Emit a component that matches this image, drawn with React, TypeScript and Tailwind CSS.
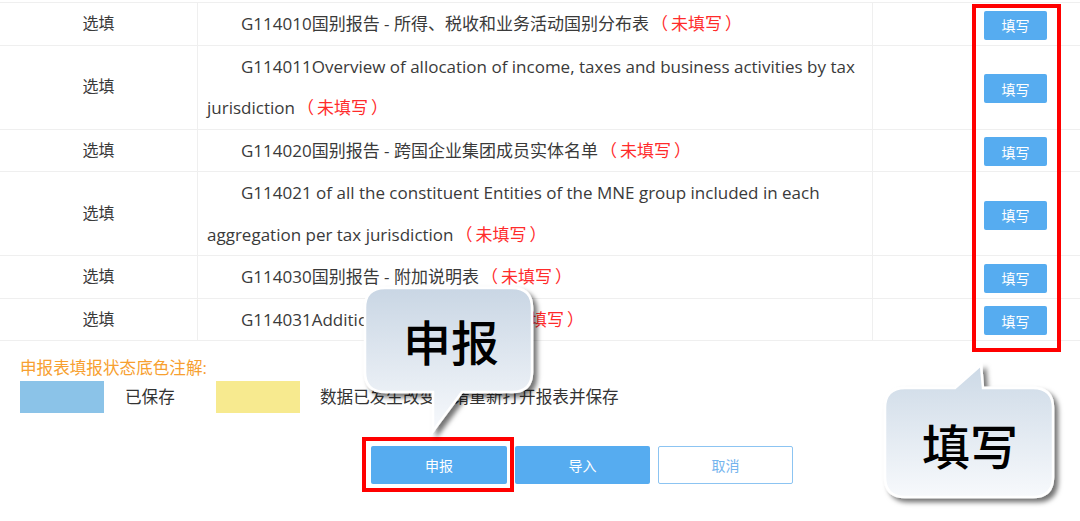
import React from "react";

const rows: { en: React.ReactNode; lines: number }[] = [
  { en: "G114010国别报告 - 所得、税收和业务活动国别分布表", lines: 1 },
  { en: "G114011Overview of allocation of income, taxes and business activities by tax jurisdiction", lines: 2 },
  { en: "G114020国别报告 - 跨国企业集团成员实体名单", lines: 1 },
  { en: "G114021 of all the constituent Entities of the MNE group included in each aggregation per tax jurisdiction", lines: 2 },
  { en: "G114030国别报告 - 附加说明表", lines: 1 },
  { en: "G114031Additional Information", lines: 1 },
];

function Bubble1() {
  return (
    <div className="absolute left-[360px] top-[284px] w-[190px] h-[160px]">
      <svg width="190" height="160" className="absolute left-0 top-0">
        <defs>
          <linearGradient id="g1" x1="0" y1="0" x2="0" y2="1">
            <stop offset="0" stopColor="#c9d6e4" />
            <stop offset="1" stopColor="#f7f9fc" />
          </linearGradient>
          <filter id="sh1" x="-20%" y="-20%" width="140%" height="140%">
            <feDropShadow dx="4" dy="4" stdDeviation="2.5" floodColor="#000" floodOpacity="0.55" />
          </filter>
        </defs>
        <path
          d="M 25 4 H 152 Q 172 4 172 24 V 88 Q 172 108 152 108 H 102 L 73 147 L 73 108 H 25 Q 5 108 5 88 V 24 Q 5 4 25 4 Z"
          fill="url(#g1)"
          stroke="#ffffff"
          strokeWidth="2.5"
          filter="url(#sh1)"
        />
      </svg>
      <div className="absolute left-[5px] top-[4px] w-[167px] h-[104px] flex items-center justify-center text-[48px] leading-none font-medium text-black [font-family:'Noto_Sans_CJK_SC',sans-serif] pl-[5px]">
        申报
      </div>
    </div>
  );
}

function Bubble2() {
  return (
    <div className="absolute left-[880px] top-[360px] w-[195px] h-[155px]">
      <svg width="195" height="155" className="absolute left-0 top-0">
        <defs>
          <linearGradient id="g2" x1="0" y1="0" x2="0" y2="1">
            <stop offset="0" stopColor="#ccd9e6" />
            <stop offset="1" stopColor="#f7f9fc" />
          </linearGradient>
          <filter id="sh2" x="-20%" y="-20%" width="140%" height="140%">
            <feDropShadow dx="4" dy="4" stdDeviation="2.5" floodColor="#000" floodOpacity="0.55" />
          </filter>
        </defs>
        <path
          d="M 25 28 H 75 L 101 5 L 103 28 H 153 Q 173 28 173 48 V 117 Q 173 137 153 137 H 25 Q 5 137 5 117 V 48 Q 5 28 25 28 Z"
          fill="url(#g2)"
          stroke="#ffffff"
          strokeWidth="2.5"
          filter="url(#sh2)"
        />
      </svg>
      <div className="absolute left-[5px] top-[28px] w-[168px] h-[109px] flex items-center justify-center text-[48px] leading-none font-medium text-black [font-family:'Noto_Sans_CJK_SC',sans-serif] pt-[3px] pl-[2px]">
        填写
      </div>
    </div>
  );
}

export default function App() {
  return (
    <div className="relative w-[1080px] h-[521px] overflow-hidden bg-white text-[#3a3a3a] [font-family:'Open_Sans','Noto_Sans_CJK_SC',sans-serif] text-[16px]">
      <div className="pt-[2px]">
        <div className="border-t border-[#efefef]">
          {rows.map((r, i) => (
            <div
              key={i}
              className="grid grid-cols-[198px_675px_1fr] border-b border-[#efefef] leading-[41.5px]"
            >
              <div className="flex items-center justify-center border-r border-[#efefef]">选填</div>
              <div className="border-r border-[#efefef] pl-[9px] pr-[8px] indent-[34px] text-[17px]">
                {r.en}
                <span className="text-[#ff2b2b] pl-[2px]">
                  （<span className="px-[3px]">未填写</span>）
                </span>
              </div>
              <div className="flex items-center pl-[111px]">
                <button className="mt-[3px] w-[63px] h-[29px] rounded-[2px] bg-[#56acf0] text-white text-[14px] leading-none [font-family:'Noto_Sans_CJK_SC',sans-serif]">
                  填写
                </button>
              </div>
            </div>
          ))}
        </div>
      </div>

      <div className="pl-[20px] pt-[17px] text-[16.6px]">
        <div className="text-[#f7a030] leading-[20px]">申报表填报状态底色注解:</div>
        <div className="mt-[3px] flex items-center h-[32px]">
          <div className="w-[84px] h-[32px] bg-[#8bc3e8]" />
          <div className="w-[112px] pl-[21px] text-[#333]">已保存</div>
          <div className="w-[84px] h-[32px] bg-[#f7ea8f]" />
          <div className="pl-[20px] text-[#333]">数据已发生改变，请重新打开报表并保存</div>
        </div>
      </div>

      <div className="mt-[33px] pl-[371px] flex gap-[8px] [font-family:'Noto_Sans_CJK_SC',sans-serif] text-[14px]">
        <button className="w-[136px] h-[38px] rounded-[2px] bg-[#56acf0] text-white">申报</button>
        <button className="w-[135px] h-[38px] rounded-[2px] bg-[#56acf0] text-white">导入</button>
        <button className="w-[135px] h-[38px] rounded-[2px] bg-white border border-[#8cc4f2] text-[#74b4ee]">取消</button>
      </div>

      <div className="absolute left-[972px] top-[4px] w-[89px] h-[348px] border-[4px] border-[#ff0000]" />
      <div className="absolute left-[362px] top-[437px] w-[152px] h-[55px] border-[4px] border-[#ff0000]" />

      <Bubble1 />
      <Bubble2 />
    </div>
  );
}
